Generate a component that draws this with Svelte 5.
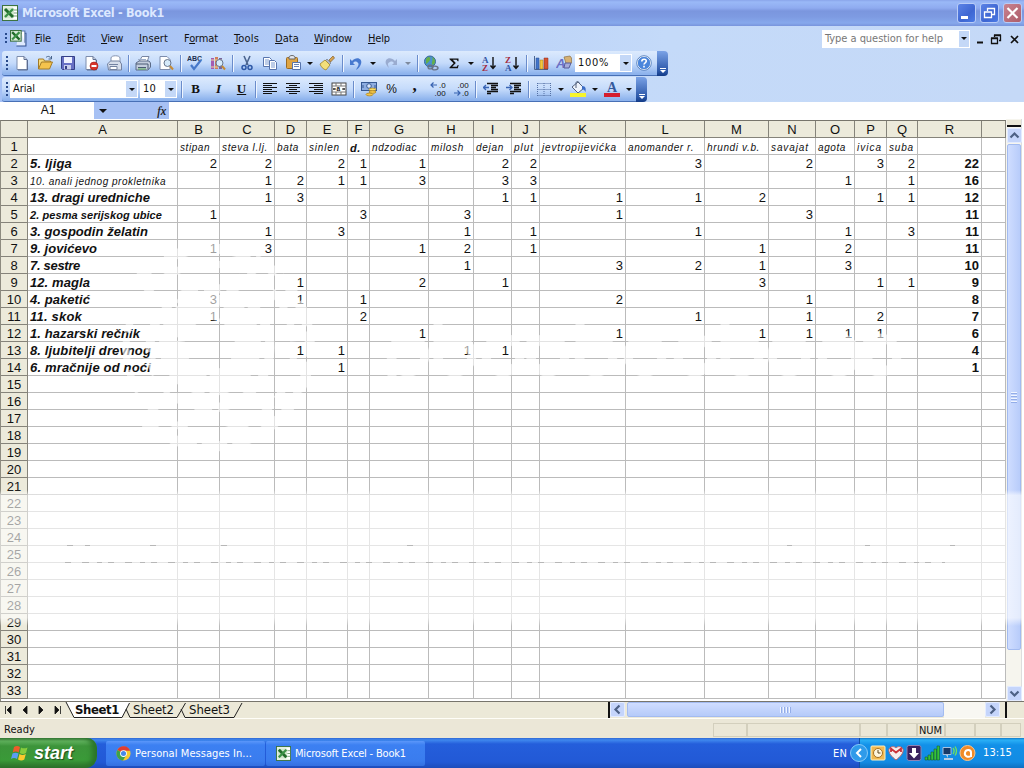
<script>
  function fit(node, width) {
    if (!width) return;
    const natural = node.getBoundingClientRect().width;
    node.style.letterSpacing = (width - natural) / node.textContent.length + 'px';
  }

  const doc = '<path d="M3 1.500h7l3 3v10H3z" fill="#fff" stroke="#7d8dad"/><path d="M10 1.500v3h3M13.500 5v10H4" fill="none" stroke="#5b6c91"/>';
  const lens = '<circle cx="9.500" cy="8" r="3.500" fill="#d5eafa" stroke="#66758c"/><path d="M12 11l3 3.500" stroke="#c58b35" stroke-width="2"/>';
  const excel = '<rect x=".5" y=".5" width="15" height="15" fill="#e6f2e3" stroke="#3d7340"/><rect x="11" y="2" width="4" height="12" fill="#fff"/><path d="M12 5h3M12 8h3M12 11h3" stroke="#78a378"/><rect x="2" y="3" width="10" height="10" fill="#cfe6cb"/><path d="M3 4l8 8" stroke="#216b2b" stroke-width="3"/><path d="M11 4l-8 8" stroke="#3b9146" stroke-width="2.400"/>';
  const icons = {
    excel,
    book: '<path d="M8 3h7v12H6" fill="#dfeaff" stroke="#31518f"/><path d="M10 1h4v11" fill="#fff" stroke="#5574a9"/><rect x=".5" y=".5" width="10" height="10" fill="#dceedd" stroke="#3d7340"/><path d="M2 2l7 7" stroke="#216b2b" stroke-width="2.200"/><path d="M9 2L2 9" stroke="#3b9146" stroke-width="2"/>',
    new: doc,
    open: '<path d="M1.500 14V4h5l1 2h6v3" fill="#f8db7c" stroke="#a27b28"/><path d="M1.500 14l3-7h11l-3 7z" fill="#f5c34d" stroke="#a27b28"/><path d="M9 2.500c2-2 4-1 5 1M14.500 1v3h-3" fill="none" stroke="#48648c"/>',
    save: '<path d="M1.500 1.500h13v13h-12l-1-1z" fill="#6770c4" stroke="#343f86"/><rect x="4" y="2" width="8" height="6" fill="#eef1ff"/><rect x="4" y="10" width="7" height="4.500" fill="#c9cfec"/><rect x="5" y="11" width="2" height="3" fill="#343f86"/>',
    perm: doc + '<circle cx="11" cy="11" r="4" fill="#d8352b" stroke="#a11b16" stroke-width=".6"/><path d="M8.500 11h5" stroke="#fff" stroke-width="2"/>',
    mail: '<path d="M5 6V3c0-3 9-3 9 0v5" fill="#fff" stroke="#8593ae"/><path d="M1.500 9l3-3h9l2 3v6h-13z" fill="#d7deeb" stroke="#7482a0"/><path d="M3 9.500h9M4 11.500h7v3H4z" fill="#fff" stroke="#7482a0"/>',
    print: '<path d="M4 7l3-5.500h7L12 7" fill="#fff" stroke="#7886a2"/><path d="M3 4.500h8" stroke="#9cadc9"/><path d="M1 8l3-2h10l1.500 2v4L13 15H1z" fill="#c3cddd" stroke="#5b6b88"/><path d="M1 9h12v5M3 12.500h8" fill="none" stroke="#4b5a75"/><path d="M3 14h8" stroke="#5fae58"/>',
    preview: '<path d="M2 1.500h7l3 3v10H2z" fill="#fff" stroke="#7d8dad"/>' + lens,
    spell: '<text x="0" y="6" font-size="7" font-family="Liberation Sans, sans-serif" font-weight="bold" fill="#203050">ABC</text><path d="M4 10l3 4 7-9" fill="none" stroke="#4678c9" stroke-width="2.200"/>',
    research: '<path d="M1 3h3v11H1z" fill="#a45bb0"/><path d="M5 2h3v12H5z" fill="#d07f58"/><path d="M9 3h3v11H9z" fill="#77649f"/><path d="M1 5h11M1 12h7" stroke="#f0d5a0"/>' + lens,
    cut: '<path d="M5 1l4 9M11 1L7 10" stroke="#4c658f" stroke-width="1.600"/><circle cx="5" cy="12.500" r="2" fill="none" stroke="#2e58a6" stroke-width="1.500"/><circle cx="11" cy="12.500" r="2" fill="none" stroke="#2e58a6" stroke-width="1.500"/>',
    copy: '<path d="M1.500 2.500h6l2 2v7h-8z" fill="#fff" stroke="#5875ad"/><path d="M3 5h4M3 7h4M3 9h4" stroke="#7d9bd0"/><path d="M7.500 5.500h5l2 2v7h-7z" fill="#fff" stroke="#5875ad"/><path d="M9 8h4M9 10h4M9 12h4" stroke="#7d9bd0"/>',
    paste: '<rect x="1.500" y="2.500" width="11" height="11" rx="1" fill="#dfa544" stroke="#9a6b24"/><path d="M4 2c1-2 5-2 6 0v2H4z" fill="#e3e6ed" stroke="#666"/><path d="M7.500 7.500h8v7h-8z" fill="#fff" stroke="#5875ad"/><path d="M9 9.500h5M9 11.500h5" stroke="#6d85b5"/>',
    painter: '<path d="M10 5l4-4 1.500 2-4 4z" fill="#d5a352" stroke="#866028" stroke-width=".7"/><path d="M8 4l4 4-2 2-4-4z" fill="#b0b6c1" stroke="#6c7177" stroke-width=".6"/><path d="M6 5l5 5-4 5c-3-1-5-3-6-6z" fill="#f3df7a" stroke="#a18429" stroke-width=".8"/>',
    undo: '<path d="M4 6c4-5 11-3 9 3-1 3-3 5-5 6 2-4 4-6 1-8-2-1-3 0-4 1l2 2H2V4z" fill="#4779cf"/>',
    redo: '<path d="M12 6c-4-5-11-3-9 3 1 2 2 3 3 4-1-3-2-5 1-6 2-1 3 0 4 1l-2 2h5V4z" fill="#9aacd0"/>',
    link: '<circle cx="7" cy="6.500" r="5.500" fill="#4b91ce" stroke="#376a9b"/><path d="M3 4c3-4 5-1 4 1S4 8 3 9zM9 2c4 2 4 6 1 8-3-2 1-4-1-8" fill="#64af4b"/><path d="M5 12c0-3 5-2 5 0s-5 3-5 0m4 1c0-3 6-2 6 0s-6 3-6 0" fill="none" stroke="#687286" stroke-width="1.400"/>',
    sum: '<path d="M3.500 3.500h9v2.700h-.8l-1-1.500H6.800L9.800 8l-3.600 3.700h4.600l1-1.700h.8l-.7 3.200H3.500v-.8L7.600 8.300 3.500 4.300z" fill="#111"/>',
    az: '<text x="1" y="7.500" font-size="9" font-weight="bold" font-family="Liberation Serif, serif" fill="#3155a3">A</text><text x="1" y="15.500" font-size="9" font-weight="bold" font-family="Liberation Serif, serif" fill="#a52c3f">Z</text><path d="M12 2v11M9.500 10.500L12 13.500l2.500-3" fill="none" stroke="#111" stroke-width="1.400"/>',
    za: '<text x="1" y="7.500" font-size="9" font-weight="bold" font-family="Liberation Serif, serif" fill="#a52c3f">Z</text><text x="1" y="15.500" font-size="9" font-weight="bold" font-family="Liberation Serif, serif" fill="#3155a3">A</text><path d="M12 2v11M9.500 10.500L12 13.500l2.500-3" fill="none" stroke="#111" stroke-width="1.400"/>',
    chart: '<path d="M1.500 1v13.500H15" fill="none" stroke="#4b6692"/><path d="M3 3h3v11H3z" fill="#4275cb" stroke="#294c8e" stroke-width=".5"/><path d="M7 5h3v9H7z" fill="#f3c63e" stroke="#a17c1c" stroke-width=".5"/><path d="M11 3h4v11h-4z" fill="#d4532f" stroke="#8e2a18" stroke-width=".5"/>',
    draw: '<path d="M8 2l6-1 1.500 2v5l-5 2z" fill="#d5b174" stroke="#8f7144" stroke-width=".7"/><text x="0" y="12.500" font-size="13" font-style="italic" font-weight="bold" font-family="Liberation Sans, sans-serif" fill="#6b6fc4">A</text><path d="M9 8h6l-2 5H8z" fill="#a7abd9" stroke="#565b99"/>',
    help: '<circle cx="8" cy="8" r="6.700" fill="#4b86db" stroke="#fff" stroke-width="1"/><circle cx="8" cy="8" r="7.300" fill="none" stroke="#4572b4" stroke-width=".8"/><path d="M5.800 6.500c0-3 4.500-3 4.500-.5C10.300 8 8 7.600 8 9.600M8 10.800v1.700" fill="none" stroke="#fff" stroke-width="1.600"/>',
    left: '<path d="M1 2.500h14M1 4.500h9M1 6.500h14M1 8.500h9M1 10.500h14M1 12.500h9" stroke="#111"/>',
    center: '<path d="M1 2.500h14M4 4.500h8M1 6.500h14M4 8.500h8M1 10.500h14M4 12.500h8" stroke="#111"/>',
    right: '<path d="M1 2.500h14M6 4.500h9M1 6.500h14M6 8.500h9M1 10.500h14M6 12.500h9" stroke="#111"/>',
    merge: '<rect x="1" y="2" width="14" height="12" fill="#fff" stroke="#444"/><path d="M1 5h14M1 11h14M5 2v3M10 2v3M5 11v3M10 11v3" stroke="#777"/><path d="M2 8h3m6 0h3M3 7v2m10-2v2" stroke="#222"/><text x="5.600" y="10.300" font-size="6.500" font-family="Liberation Sans, sans-serif" font-weight="bold" fill="#111">a</text>',
    money: '<rect x=".5" y="1.500" width="15" height="8" fill="#8eaee1" stroke="#365993"/><circle cx="8" cy="5" r="2.300" fill="#dce9ff" stroke="#365993"/><path d="M2 4v3m12-3v3" stroke="#365993"/><ellipse cx="11.500" cy="8.500" rx="3.500" ry="1.400" fill="#f9dd64" stroke="#a57e20" stroke-width=".7"/><ellipse cx="11.500" cy="11" rx="3.500" ry="1.400" fill="#f4c649" stroke="#a57e20" stroke-width=".7"/><ellipse cx="8.500" cy="13.500" rx="3.500" ry="1.400" fill="#f4c649" stroke="#a57e20" stroke-width=".7"/>',
    inc: '<path d="M1 4h6M3.500 1.500L1 4l2.500 2.500" stroke="#3762b0" fill="none" stroke-width="1.200"/><text x="9" y="7" font-size="8" font-family="Liberation Sans, sans-serif" fill="#111">.0</text><text x="4.500" y="15" font-size="8" font-family="Liberation Sans, sans-serif" fill="#111">.00</text>',
    dec: '<text x="4.500" y="7" font-size="8" font-family="Liberation Sans, sans-serif" fill="#111">.00</text><path d="M1 12h6M4.500 9.500L7 12l-2.500 2.500" stroke="#3762b0" fill="none" stroke-width="1.200"/><text x="9" y="15" font-size="8" font-family="Liberation Sans, sans-serif" fill="#111">.0</text>',
    dedent: '<path d="M4 2.500h11M8 4.500h7M8 6.500h5M8 8.500h7M4 10.500h11M4 12.500h4" stroke="#111" stroke-width="1.300"/><path d="M0 6.500h6M3 4L.5 6.500 3 9" fill="none" stroke="#3964b4" stroke-width="1.300"/>',
    indent: '<path d="M4 2.500h11M8 4.500h7M8 6.500h5M8 8.500h7M4 10.500h11M4 12.500h4" stroke="#111" stroke-width="1.300"/><path d="M0 6.500h6M3.500 4L6 6.500 3.500 9" fill="none" stroke="#3964b4" stroke-width="1.300"/>',
    borders: '<path d="M1.500 2.500h13M1.500 8.500h13M1.500 14.500h13M1.500 2v13M8 2v13M14.500 2v13" stroke="#5471a5" stroke-dasharray="1 1"/>',
    fill: '<path d="M2 6l6-5 6 6-6 5z" fill="#eef3fb" stroke="#52617d"/><path d="M6 7V2c0-2 3-2 3 0" fill="none" stroke="#52617d"/><path d="M12 5c4 0 4 3 3.500 6-1-2-2-3-3.500-2z" fill="#3c6dc6"/><rect y="12" width="16" height="4" fill="#f7f52c"/>',
    color: '<rect y="12" width="16" height="4" fill="#d51d2e"/><text x="3" y="11" font-size="14" font-family="Liberation Serif, serif" font-weight="bold" fill="#35599c">A</text>'
  };

  const standard = ['new', 'open', 'save', 'perm', 'mail', '|', 'print', 'preview', '|', 'spell', 'research', '|', 'cut', 'copy', 'paste', 'v', 'painter', '|', 'undo', 'v', 'redo', 'w', '|', 'link', 'sum', 'v', 'az', 'za', '|', 'chart', 'draw'];
  const formatting = ['|', 'B', 'I', 'U', '|', 'left', 'center', 'right', 'merge', '||', 'money', '%', ',', 'inc', 'dec', '||', 'dedent', 'indent', '||', 'borders', 'v', 'fill', 'v', 'color', 'v'];
  const menus = [['File', 16, 32], ['Edit', 18, 34], ['View', 22, 38], ['Insert', 29, 45], ['Format', 34, 50], ['Tools', 25, 41], ['Data', 24, 39], ['Window', 38, 54], ['Help', 22, 30]];

  const widths = [27, 150, 42, 55, 32, 41, 22, 59, 45, 38, 28, 86, 79, 64, 47, 39, 32, 31, 64, 24];
  const letters = 'ABCDEFGHIJKLMNOPQR'.split('');
  const names = [['', 0], ['stipan', 30], ['steva l.lj.', 46], ['bata', 22], ['sinlen', 31], ['d.', 11], ['ndzodiac', 45], ['milosh', 33], ['dejan', 28], ['plut', 20], ['jevtropijevićka', 75], ['anomander r.', 66], ['hrundi v.b.', 53], ['savajat', 38], ['agota', 28], ['ivica', 25], ['suba', 25]];
  const data = [
    ['5. ljiga', 42, 'B2 C2 E2 F1 G1 I2 J2 L3 N2 P3 Q2', 22],
    ['10. anali jednog prokletnika', 136, 'C1 D2 E1 F1 G3 I3 J3 O1 Q1', 16, 'small'],
    ['13. dragi uredniche', 120, 'C1 D3 I1 J1 K1 L1 M2 P1 Q1', 12],
    ['2. pesma serijskog ubice', 132, 'B1 F3 H3 K1 N3', 11, 'medium'],
    ['3. gospodin želatin', 118, 'C1 E3 H1 J1 L1 O1 Q3', 11],
    ['9. jovićevo', 67, 'B1 C3 G1 H2 J1 M1 O2', 11],
    ['7. sestre', 50, 'H1 K3 L2 M1 O3', 10],
    ['12. magla', 60, 'D1 G2 I1 M3 P1 Q1', 9],
    ['4. paketić', 60, 'B3 D1 F1 K2 N1', 8],
    ['11. skok', 52, 'B1 F2 L1 N1 P2', 7],
    ['1. hazarski rečnik', 110, 'G1 K1 M1 N1 O1 P1', 6],
    ['8. ljubitelji drevnog', 121, 'D1 E1 H1 I1', 4],
    ['6. mračnije od noći', 121, 'E1', 1]
  ];
  const template = widths.map((w) => w + 'px').join(' ');
  const rows = Array.from({ length: 33 }, (_, i) => {
    const d = data[i - 1];
    const cells = letters.map((l, c) => {
      if (i === 0 && names[c]) return { t: names[c][0], w: names[c][1], k: l === 'F' ? 'name strong' : 'name' };
      if (!d) return { t: '' };
      if (c === 0) return { t: d[0], w: d[1], k: 'title ' + (d[4] || '') };
      if (l === 'R') return { t: d[3], k: 'num total' };
      const hit = d[2].split(' ').find((s) => s[0] === l);
      return { t: hit ? hit.slice(1) : '', k: 'num' };
    });
    return [...cells, { t: '' }];
  });
  const panes = [34, 113, 27, 30, 28, 30, 26, 20];
  const blobs = [408, 455, 503, 548, 596, 645, 695, 742, 789, 839, 880];
</script>

{#snippet icon(name, size = 16)}
  <svg class="icon" width={size} height={size} viewBox="0 0 16 16">{@html icons[name]}</svg>
{/snippet}

{#snippet tool(t)}
  {#if t === '|' || t === '||'}<i class="sep" class:wide={t === '||'}></i>
  {:else if t === 'v' || t === 'w'}<span class="drop" class:dim={t === 'w'}><i class="tri"></i></span>
  {:else if icons[t]}<span class="tool">{@render icon(t)}</span>
  {:else}<span class="tool glyph g{t === '%' ? 'pct' : t === ',' ? 'comma' : t}">{t}</span>{/if}
{/snippet}

<div class="screen">
  <header class="titlebar">
    {@render icon('excel')}
    <b class="caption"><span use:fit={142}>Microsoft Excel - Book1</span></b>
    <span class="wbtn"><svg width="19" height="20"><path d="M4 14.500h7" stroke="#fff" stroke-width="3" /></svg></span>
    <span class="wbtn"><svg width="19" height="20"><path d="M7.500 8V5.500h7v6H12M7 5.500h8M4.500 9h7v5.500h-7zM4 9h8" fill="none" stroke="#fff" stroke-width="1.300" /></svg></span>
    <span class="wbtn close"><svg width="19" height="20"><path d="M4.500 5l10 10M14.500 5l-10 10" stroke="#fff" stroke-width="2.200" /></svg></span>
  </header>

  <nav class="menubar">
    <i class="grip"></i>
    <span class="bookicon">{@render icon('book', 17)}</span>
    {#each menus as [m, w, step]}
      {@const u = m === 'Format' ? 1 : 0}
      <span class="menu" style:width="{step}px"><span use:fit={w}>{m.slice(0, u)}<u>{m[u]}</u>{m.slice(u + 1)}</span></span>
    {/each}
    <span class="ask"><span use:fit={118}>Type a question for help</span></span>
    <span class="askdrop"><i class="tri"></i></span>
    <svg class="docbtns" width="46" height="16"><path d="M4 11.500h6" stroke="#111" stroke-width="2" /><path d="M21.500 6V4.500h6v5H26M21 4h7M18.500 7.500h6v5h-6zM18 7h7" fill="none" stroke="#111" stroke-width="1.300" /><path d="M38 5l7 7M45 5l-7 7" stroke="#111" stroke-width="1.700" /></svg>
  </nav>

  <div class="bars">
    <div class="toolbar">
      <i class="grip"></i>
      {#each standard as t}{@render tool(t)}{/each}
      <span class="combo zoom"><span class="val" use:fit={31}>100%</span><span class="cbtn"><i class="tri"></i></span></span>
      <span class="tool help">{@render icon('help')}</span>
      <span class="end"><i></i><i class="tri"></i></span>
    </div>
    <div class="toolbar second">
      <i class="grip"></i>
      <span class="combo font"><span class="val" use:fit={22}>Arial</span><span class="cbtn"><i class="tri"></i></span></span>
      <span class="combo size"><span class="val" use:fit={13}>10</span><span class="cbtn"><i class="tri"></i></span></span>
      {#each formatting as t}{@render tool(t)}{/each}
      <span class="end"><i></i><i class="tri"></i></span>
    </div>
  </div>

  <div class="formula">
    <span class="namebox">A1</span>
    <span class="fx"><i class="tri big"></i><em>fx</em></span>
  </div>

  <main class="work">
    <div class="sheet">
      <div class="row head" style:grid-template-columns={template}>
        <span></span>{#each letters as l}<span>{l}</span>{/each}<span></span>
      </div>
      {#each rows as cells, i}
        <div class="row" style:grid-template-columns={template}>
          <span class="rh">{i + 1}</span>
          {#each cells as c}<span class="cell {c.k || ''}">{#if c.t}<span use:fit={c.w}>{c.t}</span>{/if}</span>{/each}
        </div>
      {/each}
    </div>
    <div class="vscroll">
      <i class="split"></i>
      <span class="sb"><svg width="15" height="15"><path d="M3.500 9.500l4-4 4 4" fill="none" stroke="#4d6185" stroke-width="2.200" /></svg></span>
      <span class="vthumb"><i></i><i></i><i></i><i></i></span>
      <span class="vtrack"></span>
      <span class="sb"><svg width="15" height="15"><path d="M3.500 5.500l4 4 4-4" fill="none" stroke="#4d6185" stroke-width="2.200" /></svg></span>
    </div>
    <svg class="wash" width="1024" height="581" viewBox="0 120 1024 581">
      <defs><linearGradient id="band" x1="0" y1="0" x2="0" y2="1"><stop offset="0" stop-color="#fff" stop-opacity="0" /><stop offset=".04" stop-color="#fff" /><stop offset=".94" stop-color="#fff" /><stop offset="1" stop-color="#fff" stop-opacity="0" /></linearGradient></defs>
      <rect x="0" y="490" width="1024" height="136" fill="url(#band)" opacity=".62" />
      <g fill="none" stroke="#fff" opacity=".6">
        <path d="M140 277A100 100 0 0 1 310 348A100 100 0 0 1 140 418" stroke-width="10" stroke-dasharray="26 5" />
        <circle cx="210" cy="348" r="84" stroke-width="7" stroke-dasharray="24 7" />
        <circle cx="210" cy="348" r="60" stroke-width="9" stroke-dasharray="17 6" />
        <circle cx="210" cy="345" r="38" stroke-width="26" stroke-dasharray="60 4" />
        {#each blobs as x}<circle cx={x} cy="355" r="17" stroke-width="9" />{/each}
        <path d="M392 357v26M438 324v48M531 328v44M580 324v40M725 324v48M868 328v44" stroke-width="9" />
      </g>
      <path d="M65 562.500H945" stroke="#999" stroke-dasharray="6 11 7 8 5 6" opacity=".6" />
      <path d="M67 545.500h6m12 0h5m60 0h6m65 0h6m180 0h6m374 0h5m73 0h5m80 0h5" stroke="#999" opacity=".6" />
    </svg>
  </main>

  <div class="tabs">
    <svg class="tabsvg" width="250" height="18">
      <path d="M5.500 4v8M11 4v8L7 8zM27 4v8l-4-4zM39 4v8l4-4zM55 4v8l4-4zM60.500 4v8" fill="#111" stroke="#111" stroke-width=".8" />
      <path d="M66 0l8 15h48l8-15" fill="#fff" />
      <path d="M66 0l8 15.500h48L129.500 1M126 7l4 8.500h47L185.500 1M181 7l4 8.500h49L242 1" fill="none" stroke="#222" />
    </svg>
    <span class="tablabels"><b><span use:fit={44}>Sheet1</span></b><span class="lab"><span use:fit={41}>Sheet2</span></span><span class="lab"><span use:fit={41}>Sheet3</span></span></span>
    <div class="hscroll">
      <i class="bar"></i>
      <span class="sb"><svg width="15" height="15"><path d="M9.500 3.500l-4 4 4 4" fill="none" stroke="#4d6185" stroke-width="2.200" /></svg></span>
      <span class="hthumb"><i></i><i></i><i></i><i></i></span>
      <span class="htrack"></span>
      <span class="sb"><svg width="15" height="15"><path d="M5.500 3.500l4 4-4 4" fill="none" stroke="#4d6185" stroke-width="2.200" /></svg></span>
      <i class="bar last"></i>
    </div>
  </div>

  <div class="status">
    <span class="ready"><span use:fit={31}>Ready</span></span>
    {#each panes as w, i}<span class="pane" style:width="{w}px">{#if i === 4}<span use:fit={23}>NUM</span>{/if}</span>{/each}
  </div>

  <footer class="taskbar">
    <div class="start">
      <svg width="18" height="18" viewBox="0 0 18 18"><path d="M3 3c2-1.500 4-1.500 6 0L7.700 8.500c-2-1.200-4-1.200-6 0z" fill="#ee5c2b" /><path d="M10 3.400c2 1.200 4 1.200 6.500 0L15 9c-2 1.200-4 1.200-6.200 0z" fill="#86cc3d" /><path d="M1.500 9.600c2-1.300 4-1.300 6 0L6 15c-2-1.300-4-1.300-6 0z" fill="#5b9df5" /><path d="M8.500 10c2 1.200 4 1.200 6.300 0l-1.500 5.500c-2 1.200-4 1.200-6.300 0z" fill="#fbc92e" /></svg>
      <b><span use:fit={39}>start</span></b>
    </div>
    <div class="task">
      <svg width="15" height="15" viewBox="0 0 16 16"><circle cx="8" cy="8" r="7.500" fill="#f6c92f" /><path d="M8 8L1.500 4.200A7.500 7.500 0 0 1 15 5H8z" fill="#df3d31" /><path d="M8 8L1.500 4.200A7.500 7.500 0 0 0 7.500 15.500L11 9.500z" fill="#3da14c" /><circle cx="8" cy="8" r="3.600" fill="#fff" /><circle cx="8" cy="8" r="2.700" fill="#4789e8" /></svg>
      <span use:fit={117}>Personal Messages In...</span>
    </div>
    <div class="task two">{@render icon('excel', 15)}<span use:fit={111}>Microsoft Excel - Book1</span></div>
    <div class="lang"><span use:fit={14}>EN</span></div>
    <div class="tray">
      <svg class="trayicons" width="126" height="20" viewBox="850 0 126 20">
        <circle cx="859" cy="10" r="8.500" fill="#2f9bea" stroke="#86caf8" /><path d="M861 6l-4 4 4 4" fill="none" stroke="#fff" stroke-width="2" />
        <rect x="871" y="3" width="14" height="14" rx="1" fill="#f1b951" stroke="#fff1bf" /><circle cx="878" cy="10" r="4.500" fill="#fff6dd" stroke="#a47020" /><path d="M878 7v3h2.500" fill="none" stroke="#5d4420" />
        <path d="M889 6c2-3 5-3 7-1 2-2 5-2 7 1 1 4-3 8-7 11-4-3-8-7-7-11z" fill="#f6eeee" stroke="#b9646b" /><path d="M891 9V5.500l5 4 5-4V9" fill="none" stroke="#cb333a" stroke-width="1.800" />
        <rect x="907" y="2.500" width="14" height="15" rx="2" fill="#39225f" stroke="#8d83b6" /><path d="M912 5h4v5h3l-5 5.500-5-5.500h3z" fill="#fff" />
        <path d="M925 14h2.500v3H925zM928 12h2.500v5H928zM931 9h2.500v8H931zM934 6h2.500v11H934zM937 3h2.500v14H937z" fill="#35c238" stroke="#145e33" stroke-width=".6" />
        <path d="M943 4.500h8v7h-8z" fill="#173967" stroke="#a7c1df" /><path d="M946 12h2v3h-4v2h9v-2h-5" fill="#b4cbe3" /><path d="M953 5c1.500 2 1.500 4 0 6M955 3.500c2 3 2 6 0 9" fill="none" stroke="#73e25a" stroke-width="1.300" />
        <circle cx="967.500" cy="10" r="7.500" fill="#f08a27" stroke="#f9c58b" /><path d="M971 13c-3 2-7 0-6-3.500s6-3 6 0V14" fill="none" stroke="#fff" stroke-width="2" />
      </svg>
      <span class="clock"><span use:fit={29}>13:15</span></span>
    </div>
  </footer>
</div>

<style>
  .screen { width: 1024px; height: 768px; overflow: hidden; display: flex; flex-direction: column; background: #ece9d8; font: 11px/14px "DejaVu Sans Condensed", "DejaVu Sans", sans-serif; color: #111; white-space: nowrap; }
  .icon { display: block; flex: none; }
  svg { display: block; flex: none; }
  .tri { display: block; width: 0; height: 0; border: 3px solid transparent; border-top-color: #111; border-bottom: 0; }
  .tri.big { border-width: 4px 4px 0; }
  .titlebar { height: 26px; box-sizing: border-box; display: flex; align-items: center; padding: 0 2px 0 2px; gap: 4px; background: linear-gradient(#8aa5ea 0, #9ab9f7 2px, #8fabf0 8px, #7b96de 11px, #7e9be2 17px, #86a8ec 23px, #7894dc 26px); }
  .caption { flex: 1; color: #dce8ff; font-size: 12.500px; }
  .wbtn { width: 19px; height: 20px; box-sizing: border-box; border: 1px solid #b9ccf7; border-radius: 3px; background: linear-gradient(135deg, #5c83e6, #3e66d2 60%, #4b7be6); }
  .wbtn svg { margin: -1px; }
  .wbtn.close { background: linear-gradient(135deg, #c98290, #ad5d6a); }
  .menubar { height: 25px; display: flex; align-items: center; background: linear-gradient(90deg, #a2bef5, #c4daf9 65%, #c5d9f7); }
  .grip { width: 2px; height: 12px; margin: 0 3px 0 5px; flex: none; background: repeating-linear-gradient(#284a8c 0 2px, transparent 2px 4px); }
  .bookicon { width: 25px; }
  .menu { flex: none; }
  .menu u { text-underline-offset: 1px; text-decoration-skip-ink: none; }
  .ask { margin-left: auto; width: 136px; height: 18px; line-height: 18px; padding-left: 3px; box-sizing: border-box; background: #fff; color: #777; }
  .askdrop { width: 10px; height: 16px; border: 1px solid #fff; background: #c4d8f7; display: grid; place-items: center; margin-right: 3px; }
  .docbtns { margin-right: 5px; }
  .bars { height: 51px; background: linear-gradient(90deg, #a5c1f6, #c4daf9 60%, #c5d9f7); display: flex; flex-direction: column; gap: 1px; align-items: flex-start; }
  .toolbar { height: 25px; box-sizing: border-box; display: flex; align-items: center; margin-left: 2px; border-bottom: 1px solid #4870b5; border-radius: 3px 7px 7px 3px; background: linear-gradient(#dceafd, #c5dbfb 50%, #8db3ed 95%); }
  .toolbar .grip { margin: 0 2px 0 4px; height: 14px; }
  .tool { width: 23px; display: flex; justify-content: center; flex: none; }
  .sep { width: 1px; height: 17px; margin: 0 2px 0 3px; background: #6a8ccb; flex: none; box-shadow: 1px 0 #eef5ff; }
  .second .sep { margin: 0 2px; }
  .second .sep.wide { margin: 0 3px; }
  .drop { width: 11.500px; display: flex; justify-content: center; }
  .second .drop { width: 11px; }
  .dim { opacity: .4; }
  .combo { height: 18px; background: #fff; display: flex; align-items: center; justify-content: space-between; box-sizing: border-box; padding: 1px 1px 1px 3px; flex: none; }
  .cbtn { width: 11px; height: 16px; background: #c4d8f7; display: grid; place-items: center; }
  .zoom { width: 57px; }
  .font { width: 128px; }
  .size { width: 37px; margin: 0 2px 0 2px; }
  .help { margin: 0 2px 0 0; }
  .end { width: 11px; height: 25px; border-radius: 0 4px 4px 0; background: linear-gradient(#7aa2e6, #2b57a8 80%, #123a86); display: flex; flex-direction: column; justify-content: flex-end; align-items: center; gap: 1px; padding-bottom: 3px; box-sizing: border-box; }
  .second .end { margin-left: 2px; }
  .end i:first-child { width: 6px; height: 1px; background: #fff; }
  .end .tri { border-top-color: #fff; }
  .glyph { font: bold 13px/16px "Liberation Serif", serif; }
  .gI { font-style: italic; }
  .gU { text-decoration: underline; }
  .gpct { font: 12px/16px "Liberation Sans", sans-serif; }
  .gcomma { font-size: 17px; line-height: 10px; padding-bottom: 6px; }
  .formula { height: 17px; display: flex; background: #fff; font: 12px/17px "Liberation Sans", sans-serif; }
  .namebox { width: 92px; margin-left: 2px; text-align: center; }
  .fx { width: 75px; display: flex; justify-content: space-between; align-items: center; background: #a7c1f4; padding: 0 3px 0 5px; box-sizing: border-box; }
  .fx em { font: italic 12px/16px "Liberation Serif", serif; -webkit-text-stroke: .2px #111; }
  .work { height: 582px; display: flex; position: relative; flex: none; background: #fff; }
  .sheet { width: 1006px; box-sizing: border-box; border-left: 1px solid #8d8b80; border-top: 1px solid #77756c; margin-top: 1px; height: 581px; overflow: hidden; font: 13px/17px "Liberation Sans", sans-serif; }
  .row { display: grid; height: 17px; }
  .head span, .rh { box-sizing: border-box; border-right: 1px solid #85837a; border-bottom: 1px solid #85837a; background: #eceadb; text-align: center; height: 17px; }
  .rh { line-height: 18px; }
  .cell { box-sizing: border-box; border-right: 1px solid #bbb; border-bottom: 1px solid #bbb; padding: 0 2px; overflow: hidden; height: 17px; }
  .num { text-align: right; }
  .total { font-weight: bold; }
  .title { font-weight: bold; font-style: italic; }
  .title.small { font-size: 10px; font-weight: normal; line-height: 19px; }
  .title.medium { font-size: 11px; line-height: 18px; }
  .name { font-size: 10px; font-style: italic; line-height: 20px; padding-right: 0; }
  .name.strong { font-size: 11px; font-weight: bold; }
  .vscroll { width: 16px; display: flex; flex-direction: column; padding-left: 1px; background: #f6f5ee; border-right: 1px solid #ddd; box-sizing: border-box; }
  .split { height: 5px; margin-top: 1px; background: #ece9d8; border-bottom: 2px solid #111; flex: none; margin-bottom: 1px; }
  .sb { width: 15px; height: 15px; border-radius: 2px; background: #c5d5fb; box-shadow: inset 0 0 0 1px #e4ecff; flex: none; }
  .vthumb { height: 506px; margin-top: 1px; box-sizing: border-box; border: 1px solid #a3bbf0; border-radius: 2px; background: linear-gradient(90deg, #cfddff, #b8ccfa); display: flex; flex-direction: column; gap: 1px; align-items: center; justify-content: center; }
  .vthumb i { width: 6px; height: 1px; background: #f0f5ff; border-bottom: 1px solid #93ade8; box-sizing: content-box; }
  .vtrack { flex: 1; }
  .wash { position: absolute; left: 0; top: 1px; pointer-events: none; }
  .tabs { height: 17px; display: flex; position: relative; border-top: 1px solid #77756c; box-sizing: border-box; flex: none; font-size: 13px; }
  .tabsvg { position: absolute; left: 0; top: 0; }
  .tablabels { display: flex; width: 608px; padding-left: 75px; box-sizing: border-box; position: relative; line-height: 16px; }
  .tablabels b { width: 58px; }
  .lab { width: 56px; }
  .hscroll { display: flex; flex: 1; }
  .bar { width: 2px; background: #111; }
  .bar.last { margin-left: 5px; }
  .hthumb { width: 317px; height: 15px; margin-left: 2px; box-sizing: border-box; border: 1px solid #a3bbf0; border-radius: 2px; background: linear-gradient(#cfddff, #b5caf9); display: flex; gap: 1px; align-items: center; justify-content: center; }
  .hthumb i { width: 1px; height: 6px; background: #f0f5ff; border-right: 1px solid #93ade8; }
  .htrack { width: 41px; background: #f8f7f2; }
  .status { height: 20px; display: flex; align-items: center; box-sizing: border-box; border-top: 1px solid #fffef8; background: #ebe7d7; flex: none; padding: 3px 3px 0 4px; }
  .ready { flex: 1; }
  .pane { height: 14px; box-sizing: border-box; border: 1px solid #d3cfbd; padding-left: 1px; line-height: 13px; }
  .taskbar { height: 30px; display: flex; align-items: stretch; flex: none; color: #fff; background: linear-gradient(#2f69d4 0, #3f88ee 2px, #245edb 6px, #2259d6 24px, #1d4cba 30px); }
  .start { width: 97px; box-sizing: border-box; padding-left: 11px; display: flex; align-items: center; gap: 5px; border-radius: 0 10px 12px 0; background: linear-gradient(#3d7a3d 0, #62b35f 3px, #3c943a 8px, #3a9a38 22px, #2c6f2b 30px); box-shadow: inset -5px 0 5px #2b752a; }
  .start b { font: italic bold 18px/22px "Liberation Sans", sans-serif; text-shadow: 1px 1px 1px #1f4a1e; }
  .task { width: 159px; height: 25px; margin: 3px 0 0 9px; box-sizing: border-box; padding-left: 10px; display: flex; align-items: center; gap: 4px; border-radius: 2px; background: linear-gradient(#5b97fa, #3c80f2 4px, #3a7cee 20px, #3470e0); }
  .task.two { margin-left: 1px; }
  .lang { margin-left: auto; padding: 9px 12px 0 0; }
  .tray { width: 165px; display: flex; align-items: center; background: linear-gradient(#1278c8 0, #2ab0f6 2px, #1290e8 7px, #128be3 24px, #0f6fc0 30px); border-left: 1px solid #0f4fa6; box-sizing: border-box; }
  .trayicons { margin-left: -10px; }
  .clock { padding-left: 7px; }
</style>
